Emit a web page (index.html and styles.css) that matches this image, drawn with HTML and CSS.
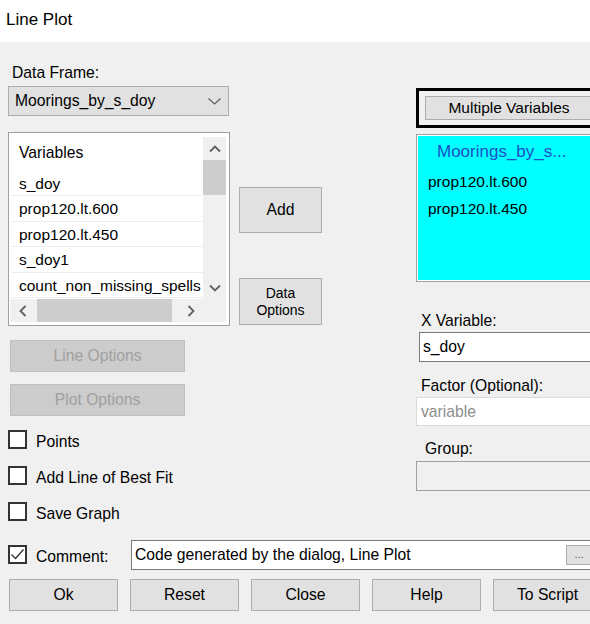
FILE: index.html
```html
<!DOCTYPE html>
<html>
<head>
<meta charset="utf-8">
<title>Line Plot</title>
<link rel="stylesheet" href="styles.css">
</head>
<body>
<div class="titlebar">Line Plot</div>
<div class="dialog">
  <div class="main">
    <div class="col-left">
      <div class="lbl lbl-df">Data Frame:</div>
      <div class="combo">
        <span>Moorings_by_s_doy</span>
        <svg class="chev" width="13" height="7" viewBox="0 0 13 7"><path d="M0.5 0.5 L6.5 6 L12.5 0.5" fill="none" stroke="#5a5a5a" stroke-width="1.1"/></svg>
      </div>
      <div class="listbox">
        <div class="lb-inner">
          <div class="lb-list">
            <div class="lb-head">Variables</div>
            <div class="lb-row">s_doy</div>
            <div class="lb-row">prop120.lt.600</div>
            <div class="lb-row">prop120.lt.450</div>
            <div class="lb-row">s_doy1</div>
            <div class="lb-row">count_non_missing_spells</div>
          </div>
          <div class="vscroll">
            <div class="sb-v-btn"><svg width="12" height="8" viewBox="0 0 12 8"><path d="M1 6.5 L6 1.5 L11 6.5" fill="none" stroke="#606060" stroke-width="1.8"/></svg></div>
            <div class="vthumb"></div>
            <div class="sb-v-btn down"><svg width="12" height="8" viewBox="0 0 12 8"><path d="M1 1.5 L6 6.5 L11 1.5" fill="none" stroke="#606060" stroke-width="1.8"/></svg></div>
          </div>
          <div class="hscroll">
            <div class="sb-h-btn"><svg width="8" height="12" viewBox="0 0 8 12"><path d="M6.5 1 L1.5 6 L6.5 11" fill="none" stroke="#606060" stroke-width="1.8"/></svg></div>
            <div class="hthumb"></div>
            <div class="sb-h-btn right"><svg width="8" height="12" viewBox="0 0 8 12"><path d="M1.5 1 L6.5 6 L1.5 11" fill="none" stroke="#606060" stroke-width="1.8"/></svg></div>
          </div>
          <div class="corner"></div>
        </div>
      </div>
      <div class="btn btn-dis btn-line">Line Options</div>
      <div class="btn btn-dis btn-plot">Plot Options</div>
      <div class="checks">
        <div class="chk"><span class="box"></span><span class="chk-text">Points</span></div>
        <div class="chk"><span class="box"></span><span class="chk-text">Add Line of Best Fit</span></div>
        <div class="chk"><span class="box"></span><span class="chk-text">Save Graph</span></div>
      </div>
    </div>
    <div class="col-mid">
      <div class="btn btn-add">Add</div>
      <div class="btn btn-data">Data<br>Options</div>
    </div>
    <div class="col-right">
      <div class="mv-frame"><div class="btn mv-btn">Multiple Variables</div></div>
      <div class="cyan-list">
        <div class="cyan-head">Moorings_by_s...</div>
        <div class="cyan-items">
          <div class="cyan-item">prop120.lt.600</div>
          <div class="cyan-item">prop120.lt.450</div>
        </div>
      </div>
      <div class="lbl lbl-x">X Variable:</div>
      <div class="tb tb-x">s_doy</div>
      <div class="lbl lbl-factor">Factor (Optional):</div>
      <div class="tb tb-factor">variable</div>
      <div class="lbl lbl-group">Group:</div>
      <div class="tb tb-group"></div>
    </div>
  </div>
  <div class="comment-row">
    <span class="box checked"><svg width="15" height="15" viewBox="0 0 15 15"><path d="M1.5 7.5 L5.5 11.5 L13.5 2.5" fill="none" stroke="#333" stroke-width="1.3"/></svg></span>
    <span class="comment-lbl">Comment:</span>
    <div class="tb tb-comment">
      <span class="comment-text">Code generated by the dialog, Line Plot</span>
      <span class="dots">...</span>
    </div>
  </div>
  <div class="btn-row">
    <div class="btn">Ok</div>
    <div class="btn">Reset</div>
    <div class="btn">Close</div>
    <div class="btn">Help</div>
    <div class="btn">To Script</div>
  </div>
</div>
</body>
</html>
```

FILE: styles.css
```css
body {
  margin: 0;
  width: 590px;
  height: 624px;
  overflow: hidden;
  background: #f0f0f0;
  font-family: "Liberation Sans", Arial, sans-serif;
  font-size: 15.7px;
  color: #000;
}

.titlebar {
  height: 42px;
  box-sizing: border-box;
  background: #fff;
  padding: 10px 0 0 6px;
  font-size: 17px;
  line-height: 20px;
}

.dialog {
  padding-top: 22px;
}

.main {
  display: flex;
  align-items: flex-start;
}

.col-left {
  flex: 0 0 222px;
  margin-left: 8px;
  display: flex;
  flex-direction: column;
}

.lbl {
  height: 18px;
  line-height: 18px;
  white-space: nowrap;
}

.lbl-df {
  padding-left: 4px;
  margin-bottom: 4px;
}

.combo {
  width: 221px;
  height: 30px;
  box-sizing: border-box;
  background: #e1e1e1;
  border: 1px solid #adadad;
  display: flex;
  align-items: center;
  padding-left: 6px;
}

.chev {
  margin-left: auto;
  margin-right: 7px;
}

.listbox {
  margin-top: 16px;
  width: 222px;
  height: 194px;
  box-sizing: border-box;
  border: 1px solid #a0a0a0;
  padding: 1px 3px 3px 1px;
  background: #fff;
}

.lb-inner {
  display: grid;
  grid-template-columns: 193px 23px;
  grid-template-rows: 165px 23px;
}

.lb-list {
  overflow: hidden;
  white-space: nowrap;
}

.lb-head {
  height: 37px;
  box-sizing: border-box;
  padding: 10px 0 0 9px;
  line-height: 18px;
}

.lb-row {
  height: 25.4px;
  box-sizing: border-box;
  margin-left: 1px;
  padding: 2px 0 0 8px;
  line-height: 22.4px;
  font-size: 15.5px;
  border-bottom: 1px solid #ededed;
}

.vscroll {
  margin-top: 3px;
  background: #f0f0f0;
  display: flex;
  flex-direction: column;
}

.sb-v-btn {
  height: 23px;
  display: flex;
  align-items: center;
  justify-content: center;
}

.sb-v-btn.down {
  margin-top: auto;
}

.vthumb {
  height: 35px;
  background: #cdcdcd;
}

.hscroll {
  display: flex;
  background: #f0f0f0;
}

.sb-h-btn {
  width: 25px;
  display: flex;
  align-items: center;
  justify-content: center;
}

.sb-h-btn.right {
  margin-left: auto;
}

.hthumb {
  width: 135px;
  margin-left: 2px;
  background: #cdcdcd;
}

.corner {
  background: #f0f0f0;
}

.btn {
  background: #e1e1e1;
  border: 1px solid #adadad;
  box-sizing: border-box;
  display: flex;
  align-items: center;
  justify-content: center;
  text-align: center;
  white-space: nowrap;
}

.btn-dis {
  margin-left: 2px;
  width: 175px;
  height: 32px;
  background: #cccccc;
  border-color: #bfbfbf;
  color: #a0a0a0;
}

.btn-line {
  margin-top: 14px;
}

.btn-plot {
  margin-top: 12px;
}

.checks {
  margin-top: 14px;
  display: flex;
  flex-direction: column;
  gap: 15px;
}

.chk {
  display: flex;
  align-items: flex-start;
  height: 21px;
}

.box {
  flex: 0 0 19px;
  width: 19px;
  height: 19px;
  box-sizing: border-box;
  border: 2px solid #333;
  background: #fff;
  display: flex;
  align-items: center;
  justify-content: center;
}

.chk-text {
  margin-left: 9px;
  margin-top: 3px;
  line-height: 18px;
  white-space: nowrap;
}

.col-mid {
  flex: 0 0 83px;
  margin-left: 9px;
  display: flex;
  flex-direction: column;
}

.btn-add {
  margin-top: 123px;
  height: 46px;
}

.btn-data {
  margin-top: 45px;
  height: 47px;
  font-size: 14px;
  line-height: 17px;
}

.col-right {
  flex: 0 0 190px;
  margin-left: 94px;
  display: flex;
  flex-direction: column;
}

.mv-frame {
  margin-top: 24px;
  height: 40px;
  box-sizing: border-box;
  border: 3px solid #000;
  padding: 5px 0 0 6px;
}

.mv-btn {
  width: 168px;
  height: 24px;
  font-size: 15.5px;
}

.cyan-list {
  margin-top: 6px;
  height: 148px;
  box-sizing: border-box;
  border: 1px solid #a0a0a0;
  box-shadow: inset 0 0 0 1px #ffffff;
  background: #00ffff;
  padding: 2px;
  white-space: nowrap;
}

.cyan-head {
  padding: 5px 0 0 18px;
  font-size: 17px;
  line-height: 20px;
  color: #1f50c6;
}

.cyan-items {
  margin-top: 7px;
}

.cyan-item {
  padding-left: 9px;
  font-size: 15.5px;
  line-height: 26.6px;
}

.lbl-x {
  margin-top: 30px;
  padding-left: 5px;
}

.tb {
  height: 30px;
  box-sizing: border-box;
  background: #fff;
  line-height: 28px;
  white-space: nowrap;
}

.tb-x {
  margin-top: 2px;
  margin-left: 3px;
  border: 1px solid #7a7a7a;
  padding-left: 3px;
}

.lbl-factor {
  margin-top: 15px;
  padding-left: 5px;
}

.tb-factor {
  margin-top: 2px;
  height: 29px;
  line-height: 27px;
  border: 1px solid #d9d9d9;
  padding-left: 4px;
  color: #8d8d8d;
}

.lbl-group {
  margin-top: 14px;
  padding-left: 9px;
}

.tb-group {
  margin-top: 3px;
  background: #f0f0f0;
  border: 1px solid #a0a0a0;
}

.comment-row {
  margin-top: 17px;
  height: 30px;
  padding-left: 8px;
  display: flex;
  align-items: flex-start;
}

.comment-row .box {
  margin-top: 5px;
}

.comment-lbl {
  flex: 0 0 95px;
  margin-left: 9px;
  margin-top: 8px;
  line-height: 18px;
}

.tb-comment {
  flex: 0 0 465px;
  border: 1px solid #7a7a7a;
  display: flex;
  align-items: center;
  padding-left: 3px;
}

.dots {
  margin-left: auto;
  margin-right: 3px;
  width: 26px;
  height: 20px;
  box-sizing: border-box;
  background: #e1e1e1;
  border: 1px solid #adadad;
  font-size: 11px;
  line-height: 16px;
  color: #555;
  text-align: center;
}

.btn-row {
  margin-top: 9px;
  padding-left: 9px;
  display: flex;
  gap: 12px;
}

.btn-row .btn {
  flex: 0 0 109px;
  height: 32px;
}
```
